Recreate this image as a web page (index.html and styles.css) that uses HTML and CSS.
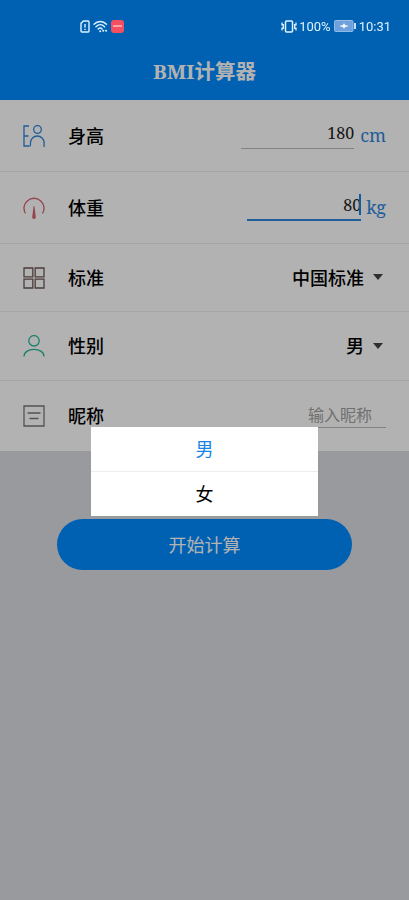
FILE: index.html
```html
<!DOCTYPE html>
<html lang="zh">

<head>
    <meta charset="UTF-8">
    <meta name="viewport" content="width=device-width, initial-scale=1.0">
    <title>BMI计算器</title>
    <link rel="stylesheet" href="styles.css">
</head>

<body>
    <div class="page">
        <header class="header">
            <div class="status">
                <div class="status-left">
                    <svg width="10" height="13" viewBox="0 0 10 13" fill="none" stroke="#def3ff" stroke-width="1.4">
                        <path d="M3.4 1H8a1 1 0 0 1 1 1v9a1 1 0 0 1-1 1H2a1 1 0 0 1-1-1V3.4z" />
                        <path d="M5 4v3.5M5 8.7V10" />
                    </svg>
                    <svg width="15" height="13" viewBox="0 0 15 13" fill="none" stroke="#def3ff" stroke-width="1.4" stroke-linecap="round">
                        <path d="M1 4.2C4.500.5 10 .5 13.500 4.200M3 6.700c2.600-2.500 6-2.500 8.600 0M5.200 9c1.300-1.200 2.800-1.200 4 0" />
                        <path d="M7.200 11.200h.1M10.200 10.800h.1M13 10.800h.1" stroke-width="1.900" />
                    </svg>
                    <span class="app-badge"><i></i></span>
                </div>
                <div class="status-right">
                    <svg width="16" height="13" viewBox="0 0 16 13" fill="none" stroke="#def3ff" stroke-width="1.5">
                        <rect x="4.500" y="1" width="7" height="11" rx="1" />
                        <path d="M1 2.500v3M2.300 4v5M1 7.500v3M15 2.500v3M13.700 4v5M15 7.500v3" stroke-width="1.300" />
                    </svg>
                    <span class="percent">100%</span>
                    <svg class="battery" width="22" height="12" viewBox="0 0 22 12">
                        <rect x=".5" y=".5" width="18.500" height="11" rx="1" fill="#6da0dc" stroke="#8fbbe9" />
                        <path d="M21 3v6" stroke="#c5ddf5" stroke-width="2" />
                        <path d="M5 6l4-1 1-2 1 2 4 1-4 1-1 2-1-2z" fill="#fff" />
                    </svg>
                    <span class="clock">10:31</span>
                </div>
            </div>
            <h1 class="title">BMI计算器</h1>
        </header>

        <form class="form" onsubmit="return false;">
            <div class="row row-tall">
                <svg class="icon blue" viewBox="0 0 22 22">
                    <path d="M6 1H1v20h5.500M1 11h4.500" />
                    <circle cx="14.500" cy="4.500" r="3.800" />
                    <path d="M6.500 21c1.200 0 1-1.800 1-3.200a6.800 6.800 0 0 1 13.600 0V22" />
                </svg>
                <label class="label" for="height">身高</label>
                <input class="number" type="text" id="height" value="180">
                <span class="unit">cm</span>
            </div>
            <div class="row row-weight">
                <svg class="icon red" viewBox="0 0 22 22">
                    <path d="M2.500 16.500A10 10 0 1 1 19.500 16.500" />
                    <path class="needle" d="M10.600 9h.8l1.300 10.500a1.800 1.800 0 1 1-3.400 0z" />
                </svg>
                <label class="label" for="weight">体重</label>
                <span class="field">
                    <input class="number focused" type="text" id="weight" value="80">
                    <i class="caret"></i>
                </span>
                <span class="unit">kg</span>
            </div>
            <div class="row row-standard">
                <svg class="icon brown" viewBox="0 0 22 22">
                    <path d="M1 1h8.800v8.800H1zM12.200 1H21v8.800h-8.800zM1 12.200h8.800V21H1zM12.200 12.200H21V21h-8.800z" />
                </svg>
                <span class="label">标准</span>
                <span class="value">中国标准</span>
                <i class="arrow"></i>
            </div>
            <div class="row row-gender">
                <svg class="icon green" viewBox="0 0 22 22">
                    <circle cx="11" cy="5.800" r="5.200" />
                    <path d="M1 21.500c0-9.600 20-9.600 20 0" />
                </svg>
                <span class="label">性别</span>
                <span class="value">男</span>
                <i class="arrow"></i>
            </div>
            <div class="row row-name">
                <svg class="icon gray" viewBox="0 0 22 22">
                    <path d="M1 1h20v20H1zM4.500 8h13M6.500 13.500h9" />
                </svg>
                <label class="label" for="nickname">昵称</label>
                <input class="nickname" type="text" id="nickname" placeholder="输入昵称">
            </div>
        </form>

        <button class="submit">开始计算</button>
    </div>

    <div class="mask">
        <ul class="picker">
            <li class="selected">男</li>
            <li>女</li>
        </ul>
    </div>
</body>

</html>
```

FILE: styles.css
```css
* {
    box-sizing: border-box;
}

body {
    margin: 0;
    font-family: "Noto Serif", "Liberation Serif", "Noto Sans CJK SC", sans-serif;
    color: #000;
}

.page {
    height: 900px;
    overflow: hidden;
    background-color: #dbdde3;
}

.header {
    height: 100px;
    background-color: #008cff;
    color: #fff;
}

/* the system bar stays above the mask */
.status {
    position: relative;
    z-index: 2;
    display: flex;
    justify-content: space-between;
    height: 43px;
    padding: 9px 18px 0 80px;
    font-family: Roboto, sans-serif;
    font-size: 13px;
    color: #def3ff;
}

.status-left,
.status-right {
    display: flex;
    align-items: center;
}

.status-left {
    gap: 3px;
}

.app-badge {
    display: flex;
    align-items: center;
    justify-content: center;
    width: 13px;
    height: 13px;
    border-radius: 3px;
    background-color: #f4505f;
}

.app-badge i {
    width: 9px;
    height: 2px;
    background-color: #ffa0a8;
}

.percent {
    margin-left: 2px;
}

.battery {
    margin: 0 3px 0 3px;
}

.title {
    margin: 0;
    text-align: center;
    font-size: 20.5px;
    line-height: 56px;
}

.form {
    background-color: #fff;
}

.row {
    display: flex;
    align-items: center;
    padding: 0 23px;
    border-bottom: 1px solid #eee;
}

.row-tall {
    height: 72px;
}

.row-weight {
    height: 72px;
}

.row-standard {
    height: 68px;
}

.row-gender {
    height: 69px;
}

.row-name {
    height: 70px;
    border-bottom: none;
}

.icon {
    width: 22px;
    height: 22px;
    margin-right: 23px;
    fill: none;
    stroke-width: 1.3;
}

.blue {
    stroke: #2f86dd;
}

.red {
    stroke: #d8606e;
}

.red .needle {
    fill: #d8606e;
    stroke: none;
}

.brown {
    stroke: #6b5956;
}

.green {
    stroke: #26b89b;
}

.gray {
    stroke: #777;
}

.label {
    margin-right: auto;
    padding-bottom: 2px;
    font-size: 18px;
    font-weight: 500;
}

input {
    padding: 0;
    border: none;
    outline: none;
    background: none;
    text-align: right;
    font-family: inherit;
}

.number {
    width: 113px;
    height: 30px;
    margin-top: -3px;
    padding-bottom: 1px;
    border-bottom: 1px solid #bbb;
    font-size: 16px;
    color: #222;
}

.focused {
    display: block;
    width: 114px;
    border-bottom: 2px solid #2f86dd;
}

.field {
    position: relative;
}

.caret {
    position: absolute;
    top: 0;
    right: 0;
    width: 2px;
    height: 21px;
    background-color: #1684e8;
}

.unit {
    margin-left: 6px;
    padding-bottom: 2px;
    font-size: 18px;
    color: #2f86dd;
}

.row-weight .unit {
    margin-left: 5px;
}

.value {
    padding-bottom: 2px;
    font-size: 18px;
    font-weight: 500;
}

.arrow {
    margin: 0 3px 1px 9px;
    border: 5.5px solid transparent;
    border-top: 6px solid #444;
    border-bottom: none;
}

.nickname {
    width: 93px;
    height: 26px;
    margin-top: -3px;
    padding-top: 2px;
    padding-right: 14px;
    border-bottom: 1px solid #bbb;
    font-size: 16px;
}

.nickname::placeholder {
    color: #a0a0a0;
}

.submit {
    display: block;
    width: 295px;
    height: 51px;
    margin: 68px auto 0;
    padding: 0 0 2px;
    border: none;
    border-radius: 26px;
    background-color: #008cff;
    color: #fff;
    font-family: inherit;
    font-size: 18px;
}

/* dimmed layer with the gender options */
.mask {
    position: fixed;
    top: 0;
    left: 0;
    display: flex;
    align-items: flex-start;
    justify-content: center;
    width: 100%;
    height: 100%;
    padding-top: 427px;
    background-color: rgba(0, 0, 0, 0.3);
}

.picker {
    width: 227px;
    margin: 0;
    padding: 0;
    list-style: none;
    background-color: #fff;
    text-align: center;
    font-size: 18px;
    line-height: 44px;
}

.picker li + li {
    border-top: 1px solid #eee;
}

.picker .selected {
    color: #1684e8;
}
```
